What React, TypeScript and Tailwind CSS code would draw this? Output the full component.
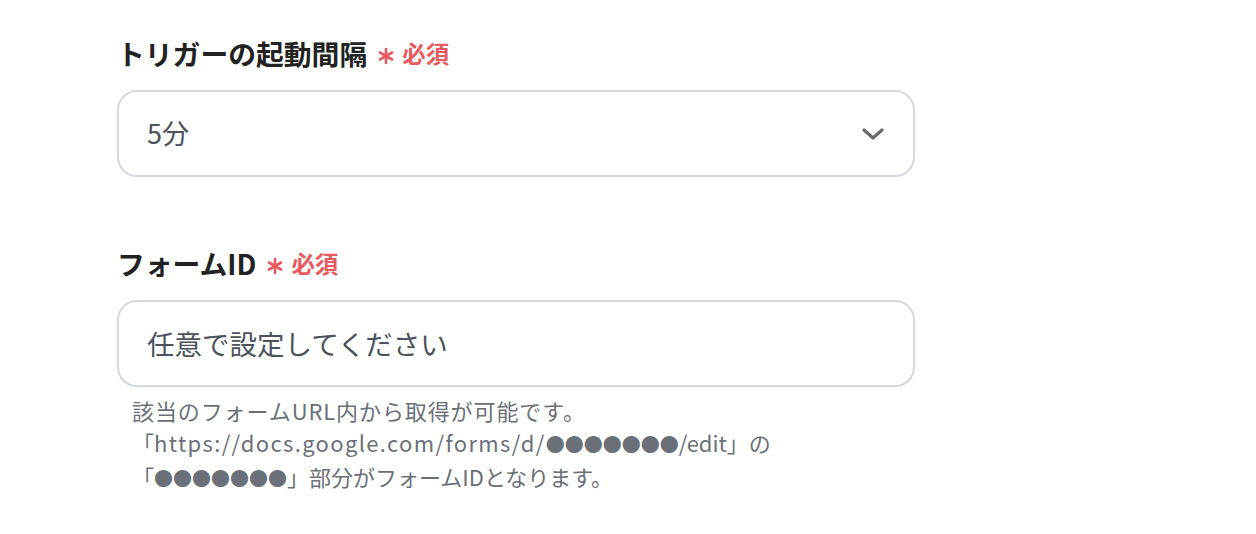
import React from "react";

const jp = "font-['Hiragino_Sans','Noto_Sans_CJK_JP',sans-serif]";

function Required(): React.ReactElement {
  return (
    <span className="ml-[10px] inline-flex items-center gap-[7px] text-[#e85a5f]">
      <svg width="18" height="18" viewBox="0 0 18 18" className="translate-y-[3px]">
        <g stroke="#e85a5f" strokeWidth="2.6" strokeLinecap="round">
          <path d="M9 2v14" />
          <path d="M2.9 5.5l12.2 7" />
          <path d="M2.9 12.5l12.2-7" />
        </g>
      </svg>
      <span className="text-[23.5px] font-bold">必須</span>
    </span>
  );
}

export default function App(): React.ReactElement {
  return (
    <main className={`min-h-screen bg-white ${jp}`}>
      <div className="w-[798px] ml-[117px] pt-[35px]">
        <label className="flex items-center text-[27.8px] font-bold leading-[36px] text-[#222]">
          トリガーの起動間隔
          <Required />
        </label>
        <div className="mt-[19px] flex h-[87px] items-center justify-between rounded-[20px] border-2 border-[#d5d9de] pl-[28px] pr-[28px]">
          <span className="text-[27px] text-[#4b525b]">5分</span>
          <svg width="24" height="14" viewBox="0 0 24 14" fill="none">
            <path d="M3 3l9 8 9-8" stroke="#666a70" strokeWidth="3.2" strokeLinecap="round" strokeLinejoin="round" />
          </svg>
        </div>

        <label className="mt-[68px] flex items-center text-[27.8px] font-bold leading-[36px] text-[#222]">
          フォームID
          <Required />
        </label>
        <div className="mt-[19px] flex h-[87px] items-center rounded-[20px] border-2 border-[#d5d9de] pl-[28px]">
          <span className="text-[27.5px] text-[#4b525b]">任意で設定してください</span>
        </div>
        <div className="mt-[7px] pl-[15px] text-[22px] leading-[32px] text-[#6b7078]">
          <div className="tracking-[0.9px]">該当のフォームURL内から取得が可能です。</div>
          <div>
            「<span className="tracking-[1.35px]">https://docs.google.com/forms/d/</span>
            <span className="text-[19px]">●●●●●●●</span>/edit」の
          </div>
          <div>
            「<span className="text-[19px]">●●●●●●●</span>」部分がフォームIDとなります。
          </div>
        </div>
      </div>
    </main>
  );
}
